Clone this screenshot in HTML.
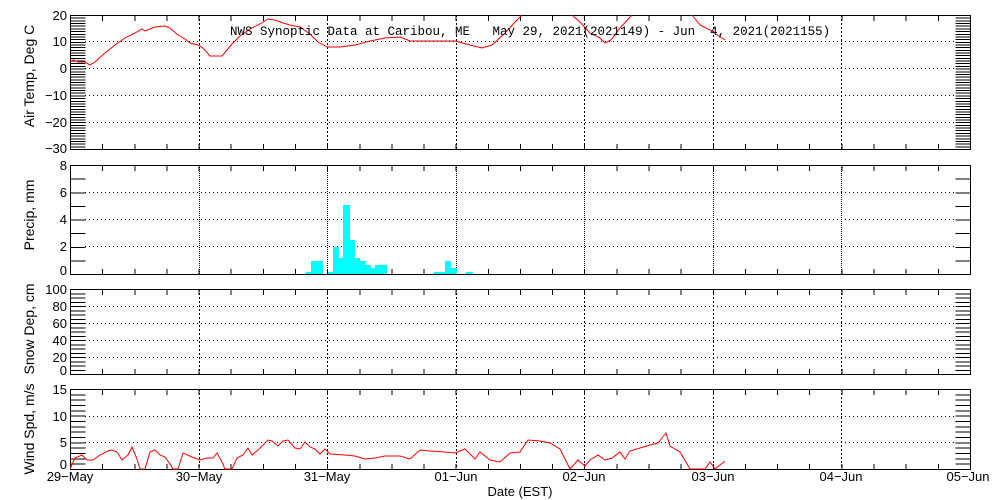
<!DOCTYPE html>
<html><head><meta charset="utf-8"><style>
html,body{margin:0;padding:0;background:#fff;}
svg{display:block;}
text{font-family:"Liberation Sans",sans-serif;font-size:13px;fill:#000;}
.t{font-family:"Liberation Mono",monospace;font-size:12.5px;white-space:pre;}
.yl{font-size:14px;}
</style></head><body>
<svg width="1000" height="500" viewBox="0 0 1000 500" xmlns="http://www.w3.org/2000/svg">
<g fill="none" stroke="#000" stroke-width="1" shape-rendering="crispEdges">
<rect x="70.5" y="15.5" width="900" height="134"/>
<rect x="70.5" y="165.5" width="900" height="109"/>
<rect x="70.5" y="289.5" width="900" height="85"/>
<rect x="70.5" y="389.5" width="900" height="80"/>
<g stroke-width="15">
<line x1="78" y1="15" x2="78" y2="150" stroke-dasharray="1 1.68"/>
<line x1="963" y1="15" x2="963" y2="150" stroke-dasharray="1 1.68"/>
<line x1="78" y1="165" x2="78" y2="275" stroke-dasharray="1 12.625"/>
<line x1="963" y1="165" x2="963" y2="275" stroke-dasharray="1 12.625"/>
<line x1="78" y1="289" x2="78" y2="375" stroke-dasharray="1 3.25"/>
<line x1="963" y1="289" x2="963" y2="375" stroke-dasharray="1 3.25"/>
<line x1="78" y1="389" x2="78" y2="470" stroke-dasharray="1 4.33"/>
<line x1="963" y1="389" x2="963" y2="470" stroke-dasharray="1 4.33"/>
</g>
<g stroke-width="6" stroke-dasharray="1 31.14">
<line x1="70" y1="18" x2="972" y2="18"/><line x1="70" y1="147" x2="972" y2="147"/>
<line x1="70" y1="168" x2="972" y2="168"/><line x1="70" y1="272" x2="972" y2="272"/>
<line x1="70" y1="292" x2="972" y2="292"/><line x1="70" y1="372" x2="972" y2="372"/>
<line x1="70" y1="392" x2="972" y2="392"/><line x1="70" y1="467" x2="972" y2="467"/>
</g>
<g stroke-dasharray="1 3">
<line x1="85" y1="41.5" x2="955" y2="41.5"/><line x1="85" y1="68.5" x2="955" y2="68.5"/><line x1="85" y1="95.5" x2="955" y2="95.5"/><line x1="85" y1="122.5" x2="955" y2="122.5"/>
<line x1="85" y1="192.5" x2="955" y2="192.5"/><line x1="85" y1="219.5" x2="955" y2="219.5"/><line x1="85" y1="246.5" x2="955" y2="246.5"/>
<line x1="85" y1="306.5" x2="955" y2="306.5"/><line x1="85" y1="323.5" x2="955" y2="323.5"/><line x1="85" y1="340.5" x2="955" y2="340.5"/><line x1="85" y1="357.5" x2="955" y2="357.5"/>
<line x1="85" y1="416.5" x2="955" y2="416.5"/><line x1="85" y1="442.5" x2="955" y2="442.5"/>
</g>
<g stroke-dasharray="2 2">
<line x1="199.5" y1="15" x2="199.5" y2="149"/><line x1="327.5" y1="15" x2="327.5" y2="149"/><line x1="456.5" y1="15" x2="456.5" y2="149"/><line x1="584.5" y1="15" x2="584.5" y2="149"/><line x1="713.5" y1="15" x2="713.5" y2="149"/><line x1="841.5" y1="15" x2="841.5" y2="149"/>
</g>
<g stroke-dasharray="1 1">
<line x1="199.5" y1="165" x2="199.5" y2="274"/><line x1="327.5" y1="165" x2="327.5" y2="274"/><line x1="456.5" y1="165" x2="456.5" y2="274"/><line x1="584.5" y1="165" x2="584.5" y2="274"/><line x1="713.5" y1="165" x2="713.5" y2="274"/><line x1="841.5" y1="165" x2="841.5" y2="274"/>
</g>
<g stroke-dasharray="2 2">
<line x1="199.5" y1="289" x2="199.5" y2="374"/><line x1="327.5" y1="289" x2="327.5" y2="374"/><line x1="456.5" y1="289" x2="456.5" y2="374"/><line x1="584.5" y1="289" x2="584.5" y2="374"/><line x1="713.5" y1="289" x2="713.5" y2="374"/><line x1="841.5" y1="289" x2="841.5" y2="374"/>
<line x1="199.5" y1="389" x2="199.5" y2="469"/><line x1="327.5" y1="389" x2="327.5" y2="469"/><line x1="456.5" y1="389" x2="456.5" y2="469"/><line x1="584.5" y1="389" x2="584.5" y2="469"/><line x1="713.5" y1="389" x2="713.5" y2="469"/><line x1="841.5" y1="389" x2="841.5" y2="469"/>
</g>
</g>
<g fill="#00ffff" shape-rendering="crispEdges">
<rect x="306" y="272" width="5" height="2"/><rect x="311" y="261" width="12" height="13"/>
<rect x="328" y="272" width="5" height="2"/><rect x="333" y="247" width="6" height="27"/>
<rect x="339" y="258" width="4" height="16"/><rect x="343" y="205" width="7" height="69"/>
<rect x="350" y="240" width="5" height="34"/><rect x="355" y="258" width="5" height="16"/>
<rect x="360" y="261" width="6" height="13"/><rect x="366" y="265" width="5" height="9"/>
<rect x="371" y="268" width="4" height="6"/><rect x="375" y="265" width="12" height="9"/>
<rect x="434" y="272" width="11" height="2"/><rect x="445" y="261" width="6" height="13"/>
<rect x="451" y="268" width="6" height="6"/><rect x="466" y="272" width="7" height="2"/>
</g>
<g fill="none" stroke="#ff0000" stroke-width="1">
<polyline points="70,61 74,60 78,62 85,62 90,65 95,62 105,53 115,45 125,38 135,33 142,29 145,31 155,27 165,26 170,28 178,35 185,39 190,43 198,45 203,48 210,56 222,56 227,50 232,44 240,36 250,29 260,24 268,19 275,20 283,23 290,25 300,27 310,34 318,42 327,47 340,47 355,45 370,41 385,38 400,37 410,41 455,41 470,45 482,48 492,45 505,33 515,22 522,15"/>
<polyline points="572,15 580,22 590,33 600,38 605,43 611,40 620,28 632,15"/>
<polyline points="692,15 700,25 710,30 725,40"/>
<polyline points="70,469 75,458 82,455 87,460 93,460 100,455 108,451 112,450 117,452 122,460 128,455 132,447 137,459 140,469 145,469 150,452 155,450 160,455 165,457 170,464 173,469 178,469 183,453 192,457 200,460 207,458 213,458 217,453 222,462 225,469 232,469 237,458 243,455 248,448 252,455 258,450 263,445 268,440 272,441 278,446 283,441 288,440 295,448 300,449 305,442 310,447 315,449 320,454 325,449 330,454 345,455 355,456 365,459 375,458 385,456 400,456 410,459 420,450 430,451 445,452 455,453 465,449 475,459 480,452 490,460 500,462 510,453 520,452 528,440 540,441 550,443 560,449 570,469 578,460 585,466 590,460 598,455 605,460 612,458 620,452 625,459 630,451 640,448 650,445 658,443 662,438 666,433 670,446 680,452 690,469 705,469 710,462 715,469 725,461"/>
</g>
<text class="t" x="230" y="35">NWS Synoptic Data at Caribou, ME   May 29, 2021(2021149) - Jun  4, 2021(2021155)</text>
<g text-anchor="end">
<text x="67" y="20">20</text><text x="67" y="46">10</text><text x="67" y="73">0</text><text x="67" y="100">−10</text><text x="67" y="127">−20</text><text x="67" y="153">−30</text>
<text x="67" y="170">8</text><text x="67" y="197">6</text><text x="67" y="224">4</text><text x="67" y="251">2</text><text x="67" y="275">0</text>
<text x="67" y="294">100</text><text x="67" y="311">80</text><text x="67" y="328">60</text><text x="67" y="345">40</text><text x="67" y="362">20</text><text x="67" y="375">0</text>
<text x="67" y="394">15</text><text x="67" y="421">10</text><text x="67" y="447">5</text><text x="67" y="469">0</text>
</g>
<g text-anchor="middle">
<text x="70" y="481">29−May</text><text x="199" y="481">30−May</text><text x="327" y="481">31−May</text><text x="456" y="481">01−Jun</text><text x="584" y="481">02−Jun</text><text x="713" y="481">03−Jun</text><text x="841" y="481">04−Jun</text><text x="968" y="481">05−Jun</text>
<text x="520" y="496">Date (EST)</text>
<text class="yl" transform="translate(34,76) rotate(-90)">Air Temp, Deg C</text>
<text class="yl" transform="translate(34,215) rotate(-90)">Precip, mm</text>
<text class="yl" transform="translate(34,329) rotate(-90)">Snow Dep, cm</text>
<text class="yl" transform="translate(34,429) rotate(-90)">Wind Spd, m/s</text>
</g>
</svg>
</body></html>
